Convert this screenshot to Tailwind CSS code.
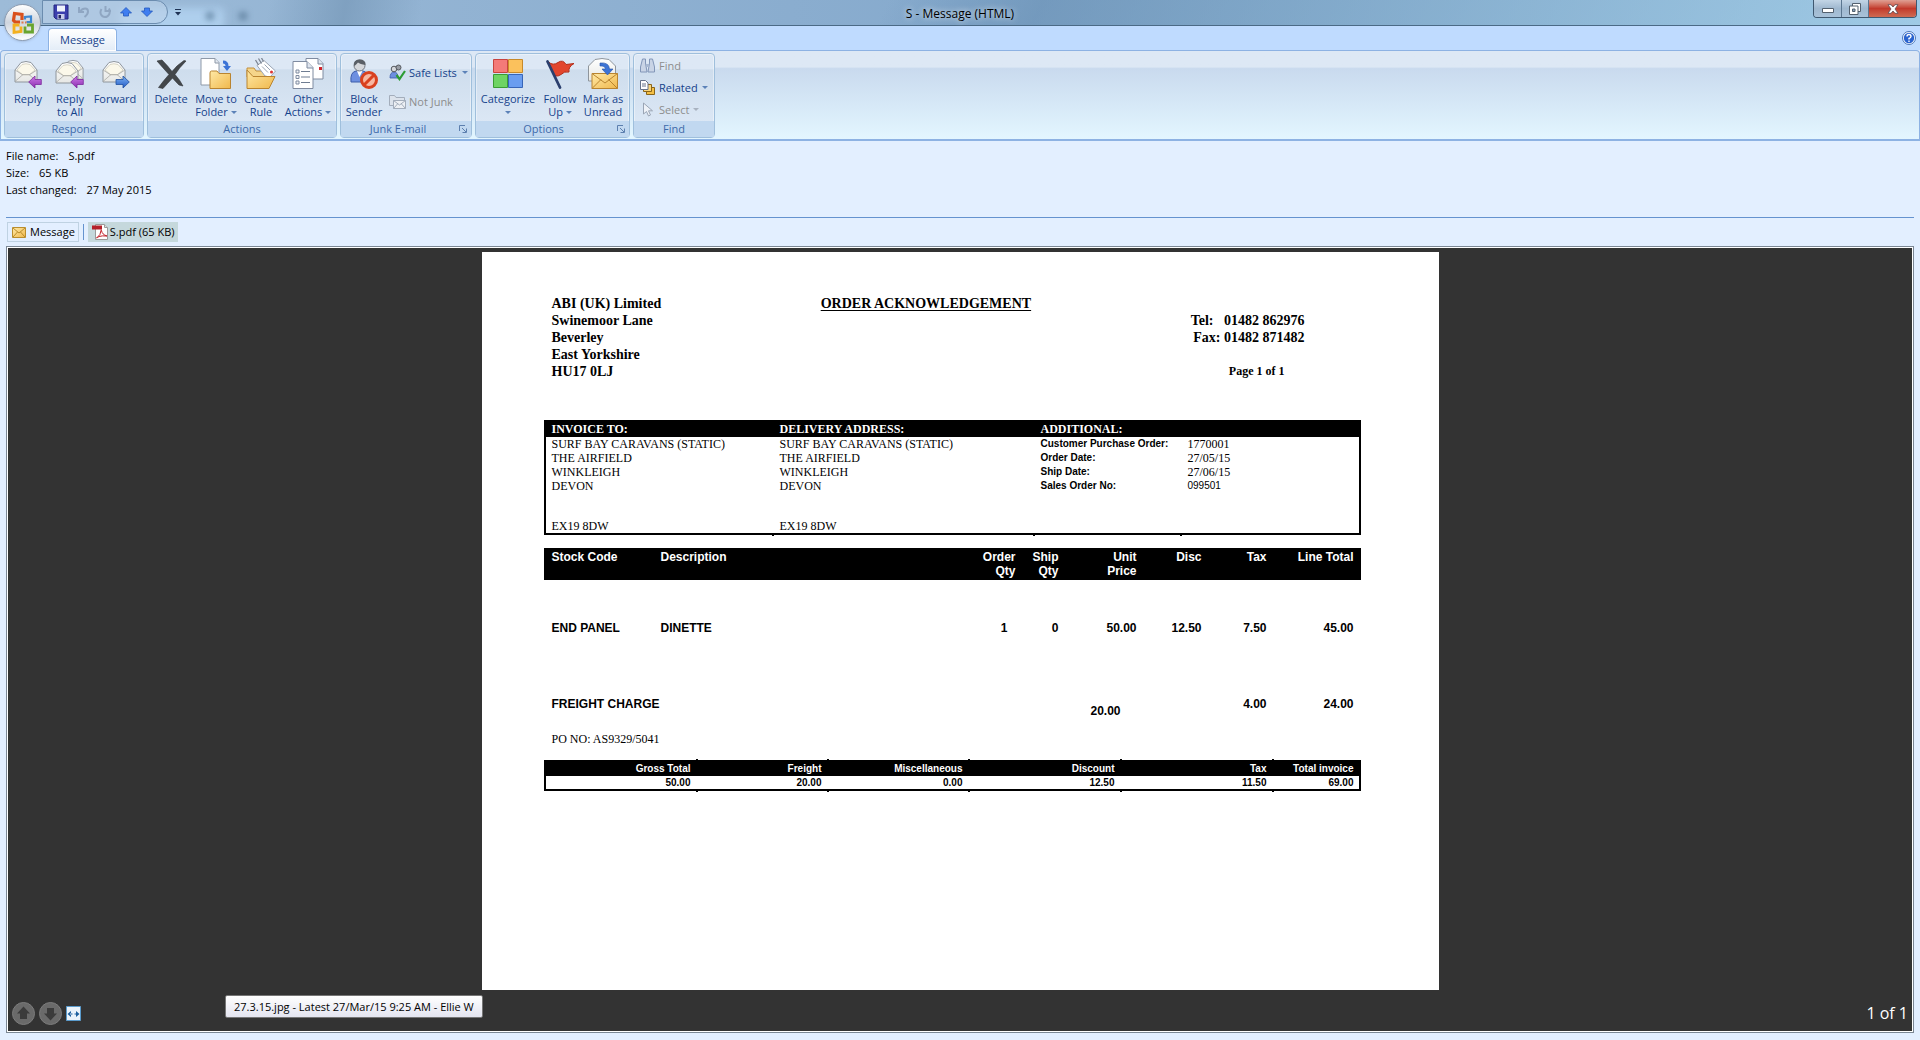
<!DOCTYPE html>
<html lang="en">
  <head>
    <meta charset="UTF-8" />
    <meta name="viewport" content="width=device-width, initial-scale=1.0" />
    <title>S - Message (HTML)</title>
    <script src="https://cdn.jsdelivr.net/npm/@tailwindcss/browser@4"></script>
  </head>

  <body class="min-h-screen flex flex-col bg-[#e3efff] font-['Open_Sans',sans-serif] text-[11px] text-black">
    <!-- Shared icon parts -->
    <svg class="absolute size-0">
      <defs>
        <linearGradient id="paper" x1="0" y1="0" x2="0" y2="1">
          <stop offset="0" stop-color="#ffffff" />
          <stop offset="1" stop-color="#e6e7e4" />
        </linearGradient>
        <linearGradient id="folder" x1="0" y1="0" x2="1" y2="1">
          <stop offset="0" stop-color="#ffe9a6" />
          <stop offset="1" stop-color="#f0b84c" />
        </linearGradient>
        <linearGradient id="purple" x1="0" y1="0" x2="0" y2="1">
          <stop offset="0" stop-color="#cf7be8" />
          <stop offset="1" stop-color="#8a2db0" />
        </linearGradient>
        <linearGradient id="blue" x1="0" y1="0" x2="0" y2="1">
          <stop offset="0" stop-color="#7db4f5" />
          <stop offset="1" stop-color="#2259c4" />
        </linearGradient>
        <symbol id="envelope" viewBox="0 0 24 24">
          <path d="M1 10 7 2.500Q12 .5 17 2.500L23 10V22H1Z" fill="url(#paper)" stroke="#8e959c" />
          <path d="M3 10 8 4.500Q12 3 16 4.500L21 10 15 15H9Z" fill="#fbf8ea" stroke="#c9c5b4" stroke-width=".7" />
          <path d="M1 21.500 9 14.500h6l8 7M1 10l8 5M23 10l-8 5" fill="none" stroke="#a9a9a4" stroke-width=".8" />
        </symbol>
        <symbol id="arrow-left" viewBox="0 0 14 14">
          <path d="M.7 7 7 1v3.500h6.300v5H7V13Z" fill="url(#purple)" stroke="#7b2a9c" stroke-width=".8" />
        </symbol>
      </defs>
    </svg>

    <!-- Title bar -->
    <header class="relative z-10 h-[26px] flex items-start justify-between border-b border-[#4b6a86] bg-linear-to-r from-[#9dbbd8] via-[#86aacd] to-[#a3c8e4]">
      <div class="absolute inset-0 overflow-hidden bg-linear-100 from-transparent from-14% via-[#7193b3]/60 via-18% to-transparent to-22%">
        <div class="absolute top-2 left-[120px] h-6 w-[104px] rounded bg-[#b4d4f2]/80 blur-xs"></div>
        <div class="absolute top-3 left-[206px] size-2 rounded-full bg-[#4f708f]/80 blur-[3px]"></div>
        <div class="absolute top-3 left-[239px] size-2 rounded-full bg-[#4f708f]/80 blur-[3px]"></div>
      </div>
      <div class="absolute inset-0 bg-linear-115 from-transparent from-46% via-[#5f87ac]/50 via-54% to-[#9ccbe6]/60"></div>
      <div class="relative flex flex-1 items-start">
        <div class="ml-[42px] flex h-6 w-[126px] items-center gap-[9px] rounded-r-full border border-[#6b8caf] bg-[#bdd2e9]/60 pl-2.5">
          <button aria-label="Save">
            <svg class="size-4" viewBox="0 0 16 16">
              <path d="M1 1h14v14H3l-2-2Z" fill="#3c3fae" stroke="#25277e" />
              <path d="M4 1.500h8v6H4Z" fill="#eef2fb" />
              <path d="M4.500 10h7v5h-7Z" fill="#c8cdea" />
              <path d="M5.500 11h2.500v3.500H5.500Z" fill="#23265f" />
            </svg>
          </button>
          <button aria-label="Undo">
            <svg class="size-3" viewBox="0 0 12 12">
              <path d="M1 1v5h5" fill="none" stroke="#8fa6c2" stroke-width="2" />
              <path d="M2 5.500C5 1.500 10 1.500 10 5.500 10 8 8.500 9.500 6.500 11" fill="none" stroke="#8fa6c2" stroke-width="2" />
            </svg>
          </button>
          <button aria-label="Repeat">
            <svg class="size-3" viewBox="0 0 12 12">
              <path d="M10 2.500C12 7 9.500 11 6 11S0 7 2.500 3" fill="none" stroke="#8fa6c2" stroke-width="2" />
              <path d="M6.500 0v5H12" fill="none" stroke="#8fa6c2" stroke-width="2" />
            </svg>
          </button>
          <button aria-label="Previous item">
            <svg class="size-3" viewBox="0 0 12 12">
              <path d="M6 1.500 11.500 7H8.500v3h-5V7H.5Z" fill="#3f7df0" stroke="#2458bd" stroke-width=".8" />
            </svg>
          </button>
          <button aria-label="Next item">
            <svg class="size-3" viewBox="0 0 12 12">
              <path d="M6 10.500 .5 5h3V2h5v3h3Z" fill="#3f7df0" stroke="#2458bd" stroke-width=".8" />
            </svg>
          </button>
        </div>
        <button class="mt-2 ml-1.5" aria-label="Customize toolbar">
          <svg class="size-2" viewBox="0 0 8 8">
            <path d="M1 1.500h6" stroke="#1f3355" />
            <path d="M1 4h6L4 7.500Z" fill="#1f3355" />
          </svg>
        </button>
      </div>
      <h1 class="relative pt-1 text-xs leading-5 text-shadow-[0_0_6px_white]">S - Message (HTML)</h1>
      <div class="relative flex flex-1 justify-end">
        <div class="mr-[3px] flex h-[18px] overflow-hidden rounded-b border border-t-0 border-[#3f5870]">
          <button class="flex w-7 items-center justify-center border-r border-[#5b7690] bg-linear-to-b from-[#c3d5e6] via-[#9fb8cf] via-50% to-[#a9c2d9]" aria-label="Minimize">
            <svg class="w-3 h-2" viewBox="0 0 12 8"><path d="M.5 3.500h11v4H.5Z" fill="#fff" stroke="#53606e" /></svg>
          </button>
          <button class="flex w-[27px] items-center justify-center border-r border-[#5b7690] bg-linear-to-b from-[#c3d5e6] via-[#9fb8cf] via-50% to-[#a9c2d9]" aria-label="Restore">
            <svg class="size-3" viewBox="0 0 12 12">
              <path d="M3.500 .5h8v8h-8Z" fill="#fff" stroke="#53606e" />
              <path d="M.5 3h8.500v8.500H.5Z" fill="#fff" stroke="#53606e" />
              <path d="M3.500 6h2.500v2.500H3.500Z" fill="#8aa5bf" stroke="#53606e" />
            </svg>
          </button>
          <button class="flex w-[47px] items-center justify-center bg-linear-to-b from-[#dfa094] via-[#c2392b] via-50% to-[#cf6a52]" aria-label="Close">
            <svg class="w-3 h-2.5" viewBox="0 0 12 10">
              <path d="M1 .7h3L6 3 8 .7h3L8 5l3 4.300H8L6 7 4 9.300H1L4 5Z" fill="#fff" stroke="#5d4a52" stroke-width=".8" />
            </svg>
          </button>
        </div>
      </div>

      <button class="absolute top-1 left-1 size-[37px] rounded-full border border-[#8d9cb0] bg-linear-to-b from-white via-[#cfd5de] via-50% to-white shadow" aria-label="Office menu">
        <svg class="m-auto size-6" viewBox="0 0 24 24" fill="none">
          <path d="M11 9V3.500L3.500 2.500 2.500 9.500l1.500 1.500h5" stroke="#d9501c" stroke-width="3.200" />
          <path d="M14 8.500V6l6-.5V11h-4.500" stroke="#3e86cf" stroke-width="2.200" />
          <path d="M10 15.500v5L3 21.500V14h5.500" stroke="#f3b01f" stroke-width="2.800" />
          <path d="M14 15.500v5.500h7.500V14H16" stroke="#69a52f" stroke-width="2.800" />
          <path d="M10.500 11.500h5" stroke="#e07a4a" stroke-width="1.800" stroke-dasharray="2 1.500" />
        </svg>
      </button>
    </header>

    <!-- Ribbon tabs -->
    <nav class="flex h-6 items-end justify-between bg-[#bfdbff] pl-12 pr-1">
      <button class="relative -mb-px h-[23px] w-[69px] rounded-t border border-b-0 border-[#8db2e3] bg-linear-to-b from-white to-[#e2ecf7] text-[#15428b] shadow-[inset_0_0_0_1px_white]">Message</button>
      <button class="self-center" aria-label="Help">
        <svg class="size-3.5" viewBox="0 0 14 14">
          <circle cx="7" cy="7" r="6.500" fill="#fff" stroke="#4a76b8" />
          <circle cx="7" cy="7" r="5.200" fill="#2a63cf" />
          <path d="M5 5.500Q5 3.500 7 3.500T9 5.500Q9 6.500 7 7.500V8.500M7 9.500v1.500" fill="none" stroke="#fff" stroke-width="1.400" />
        </svg>
      </button>
    </nav>

    <!-- Ribbon -->
    <div class="flex h-[91px] items-start gap-[3px] rounded-t-sm border border-b-2 border-[#8db2e3] bg-linear-to-b from-[#dde8f5] from-18% via-[#c9daee] via-20% to-[#e3f6ff] px-[3px] pt-0.5 pb-1 text-[#15428b] leading-[13px]">
      <section class="flex h-[85px] w-[140px] flex-col rounded-sm border border-[#9fbfdc] bg-linear-to-b from-[#dde8f5] from-18% via-[#cedded] via-19% to-[#dfeaf7] shadow-[inset_0_0_0_1px_#ffffff66]">
        <div class="flex flex-1 items-start px-0.5 pt-1">
          <button class="flex w-[42px] flex-col items-center gap-0.5">
            <svg class="size-8" viewBox="0 0 32 32">
              <use href="#envelope" x="2" y="2" width="24" height="24" />
              <use href="#arrow-left" x="16" y="17" width="14" height="14" />
            </svg>
            <span>Reply</span>
          </button>
          <button class="flex w-[42px] flex-col items-center gap-0.5">
            <svg class="size-8" viewBox="0 0 32 32">
              <use href="#envelope" x="8" y="1" width="22" height="22" />
              <use href="#envelope" x="1" y="3" width="24" height="24" />
              <use href="#arrow-left" x="16" y="17" width="14" height="14" />
            </svg>
            <span>Reply<br />to All</span>
          </button>
          <button class="flex w-12 flex-col items-center gap-0.5">
            <svg class="size-8" viewBox="0 0 32 32">
              <use href="#envelope" x="3" y="2" width="24" height="24" />
              <path d="M30.300 24 24 18v3.500h-7v5h7V30Z" fill="url(#blue)" stroke="#22509f" stroke-width=".8" />
            </svg>
            <span>Forward</span>
          </button>
        </div>
        <h2 class="h-4 bg-[#c1d8f0] text-center leading-4 text-[#3e6aaa]">Respond</h2>
      </section>

      <section class="flex h-[85px] w-[190px] flex-col rounded-sm border border-[#9fbfdc] bg-linear-to-b from-[#dde8f5] from-18% via-[#cedded] via-19% to-[#dfeaf7] shadow-[inset_0_0_0_1px_#ffffff66]">
        <div class="flex flex-1 items-start px-0.5 pt-1">
          <button class="flex w-[42px] flex-col items-center gap-0.5">
            <svg class="size-8" viewBox="0 0 32 32">
              <path d="M2 3 7 2Q13 8 17 13.500 22 7 29 2.500L31 3Q24 10 20 16.500 25 22 28 28L24 27Q20 23 17.500 20 12 26 8 30.500L3.500 29.500Q9 22 14 16.500 8 10 2 3Z" fill="#43474b" stroke="#2f3235" stroke-width=".6" />
            </svg>
            <span>Delete</span>
          </button>
          <button class="flex w-12 flex-col items-center gap-0.5">
            <svg class="size-8" viewBox="0 0 32 32">
              <path d="M1 .5h14l4 4V27H1Z" fill="#fff" stroke="#8e99a8" />
              <path d="M15 .5V5h4" fill="#e3e8ef" stroke="#8e99a8" />
              <path d="M10 15q0-2 1.500-2h5.500l2 2.500h11.500V30.500H10Z" fill="url(#folder)" stroke="#b98430" />
              <path d="M23 2.500Q28.500 2.500 28.500 8H31l-4 5-4-5h2.500Q25.500 5.500 23 5.500Z" fill="#3d74d6" />
            </svg>
            <span class="whitespace-nowrap">Move to<br />Folder <i class="mb-0.5 inline-block border-x-[3px] border-t-[3px] border-x-transparent border-t-[#5c82b8]"></i></span>
          </button>
          <button class="flex w-[42px] flex-col items-center gap-0.5">
            <svg class="size-8" viewBox="0 0 32 32">
              <path d="M2 10h7l2 3h13v6H2Z" fill="#f5d58a" stroke="#c18f3c" />
              <path d="M12 7.500 19 2.500 30.500 13 25 19 20 18Z" fill="#fff" stroke="#9ba5b4" />
              <path d="M10.500 2l3 5M13.500 .5l3 5M16.500 0l2 3.500" stroke="#7d8592" stroke-width="1.300" />
              <path d="M17 8.500 23 14.500M19.500 6.500 25 12" stroke="#9ba5b4" />
              <circle cx="26.500" cy="14" r="1.500" fill="#d33" />
              <path d="M2 30.500V12L8 18.500H30L24 30.500Z" fill="url(#folder)" stroke="#b98430" />
            </svg>
            <span>Create<br />Rule</span>
          </button>
          <button class="flex w-[52px] flex-col items-center gap-0.5">
            <svg class="size-8" viewBox="0 0 32 32">
              <path d="M14 .5h12l5 5V21H14Z" fill="#fff" stroke="#7f8ba0" />
              <path d="M26 .5V6h5" fill="#dfe5ee" stroke="#7f8ba0" />
              <path d="M27 9h3v3h-3Z" fill="#d0252b" />
              <path d="M1 3.500h14l6 6V30.500H1Z" fill="#fff" stroke="#7f8ba0" />
              <path d="M15 3.500V10h6" fill="#dfe5ee" stroke="#7f8ba0" />
              <path d="M9 13.500h9M9 19h9M9 24.500h9" stroke="#6f7d92" />
              <path d="M4 12h3v3H4ZM4 17.500h3v3H4ZM4 23h3v3H4Z" fill="#f1f3f6" stroke="#7f8ba0" />
            </svg>
            <span class="whitespace-nowrap">Other<br />Actions <i class="mb-0.5 inline-block border-x-[3px] border-t-[3px] border-x-transparent border-t-[#5c82b8]"></i></span>
          </button>
        </div>
        <h2 class="h-4 bg-[#c1d8f0] text-center leading-4 text-[#3e6aaa]">Actions</h2>
      </section>

      <section class="flex h-[85px] w-[132px] flex-col rounded-sm border border-[#9fbfdc] bg-linear-to-b from-[#dde8f5] from-18% via-[#cedded] via-19% to-[#dfeaf7] shadow-[inset_0_0_0_1px_#ffffff66]">
        <div class="flex flex-1 items-start px-0.5 pt-1">
          <button class="flex w-[42px] flex-col items-center gap-0.5">
            <svg class="size-8" viewBox="0 0 32 32">
              <path d="M3 24Q2 14 8 13h7Q21 14 20 24Z" fill="#6d8fe0" stroke="#3c5cab" />
              <path d="M9 13l2.500 6 3-6Z" fill="#fff" />
              <circle cx="11.500" cy="7.500" r="5.500" fill="#d6d8dc" stroke="#73777f" />
              <path d="M6 8Q5 1.500 11.500 1.500T17.500 7Q12 6 10 4.500 8 7 6 8Z" fill="#5a5f66" />
              <circle cx="21" cy="22" r="7.500" fill="#f7b7a2" stroke="#d9411f" stroke-width="3" />
              <path d="M16 27 26 17" stroke="#d9411f" stroke-width="3" />
            </svg>
            <span>Block<br />Sender</span>
          </button>
          <div class="flex flex-col gap-3 pt-1.5 pl-1">
            <button class="flex items-center gap-[3px] whitespace-nowrap">
              <svg class="size-[17px]" viewBox="0 0 17 17">
                <path d="M1 14q0-6 4-6t4 6Z" fill="#6d8fe0" stroke="#3c5cab" stroke-width=".8" />
                <circle cx="5" cy="5" r="2.800" fill="#d6d8dc" stroke="#55595f" />
                <circle cx="9.500" cy="3.500" r="2.500" fill="#9a9ea5" stroke="#55595f" />
                <path d="m7.500 11 3 4L16 7" fill="none" stroke="#2c9c33" stroke-width="2.200" />
              </svg>
              Safe Lists
              <i class="ml-0.5 border-x-[3px] border-t-[3px] border-x-transparent border-t-[#5c82b8]"></i>
            </button>
            <button class="flex items-center gap-[3px] whitespace-nowrap text-[#8d8d8d]" disabled>
              <svg class="size-[17px]" viewBox="0 0 17 17">
                <path d="M.5 2.500h5l1.500 2h8.500v8H.5Z" fill="#dce3ec" stroke="#a3adbb" />
                <path d="M4.500 7.500h12v8h-12Z" fill="#edf0f4" stroke="#a3adbb" />
                <path d="m4.500 7.500 6 4.500 6-4.500M4.500 15.500l4-4.500M16.500 15.500l-4-4.500" fill="none" stroke="#a3adbb" />
              </svg>
              Not Junk
            </button>
          </div>
        </div>
        <h2 class="relative h-4 bg-[#c1d8f0] pr-4 text-center leading-4 text-[#3e6aaa]">
          Junk E-mail
          <button class="absolute top-1 right-1" aria-label="Junk E-mail options">
            <svg class="size-2" viewBox="0 0 8 8"><path d="M.5 6V.5H6M3 3l4 4M7.500 3.500v4h-4" fill="none" stroke="#5c7fae" /></svg>
          </button>
        </h2>
      </section>

      <section class="flex h-[85px] w-[155px] flex-col rounded-sm border border-[#9fbfdc] bg-linear-to-b from-[#dde8f5] from-18% via-[#cedded] via-19% to-[#dfeaf7] shadow-[inset_0_0_0_1px_#ffffff66]">
        <div class="flex flex-1 items-start px-0.5 pt-1">
          <button class="flex w-[60px] flex-col items-center gap-0.5">
            <svg class="size-8" viewBox="0 0 32 32">
              <path d="M1.500 1.500h14v13h-14Z" fill="#f47a78" stroke="#c8443f" />
              <path d="M16.500 1.500h14v13h-14Z" fill="#fbc15c" stroke="#c88a2a" />
              <path d="M1.500 16.500h14v13h-14Z" fill="#6ed463" stroke="#3a9c34" />
              <path d="M16.500 16.500h14v13h-14Z" fill="#6a9df0" stroke="#3765b8" />
            </svg>
            <span class="flex flex-col items-center">Categorize <i class="mt-1.5 border-x-[3px] border-t-[3px] border-x-transparent border-t-[#5c82b8]"></i></span>
          </button>
          <button class="flex w-11 flex-col items-center gap-0.5">
            <svg class="size-8" viewBox="0 0 32 32">
              <path d="M4.500 4Q9 8 14 4.500T22 6.500L30 5.500Q24 9 25 14q-5-1-8 2.500-2 2-7 1.500Z" fill="#e2452d" stroke="#b32c18" />
              <path d="M3.500 3.500 16 29.500" stroke="#2b3f6e" stroke-width="2.800" stroke-linecap="round" />
            </svg>
            <span class="whitespace-nowrap">Follow<br />Up <i class="mb-0.5 inline-block border-x-[3px] border-t-[3px] border-x-transparent border-t-[#5c82b8]"></i></span>
          </button>
          <button class="flex w-[42px] flex-col items-center gap-0.5">
            <svg class="size-8" viewBox="0 0 32 32">
              <path d="M1.500 8 8 1.500Q15-.5 22 1.500L28.500 8V23h-27Z" fill="url(#paper)" stroke="#8e959c" />
              <path d="M5 15.500h25.500v15H5Z" fill="url(#folder)" stroke="#b98430" />
              <path d="m5 15.500 13 9.500 12.500-9.500M5 30.500l9-9M30.500 30.500l-9-9" fill="none" stroke="#b98430" />
              <path d="M13 5q9-1 9.500 6H26l-5.500 6L15 11h3.500Q18 7.500 13 8Z" fill="#3d74d6" stroke="#2550a5" stroke-width=".6" />
            </svg>
            <span class="whitespace-nowrap">Mark as<br />Unread</span>
          </button>
        </div>
        <h2 class="relative h-4 bg-[#c1d8f0] pr-[18px] text-center leading-4 text-[#3e6aaa]">
          Options
          <button class="absolute top-1 right-1" aria-label="Message options">
            <svg class="size-2" viewBox="0 0 8 8"><path d="M.5 6V.5H6M3 3l4 4M7.500 3.500v4h-4" fill="none" stroke="#5c7fae" /></svg>
          </button>
        </h2>
      </section>

      <section class="flex h-[85px] w-[82px] flex-col rounded-sm border border-[#9fbfdc] bg-linear-to-b from-[#dde8f5] from-18% via-[#cedded] via-19% to-[#dfeaf7] shadow-[inset_0_0_0_1px_#ffffff66]">
        <div class="flex flex-1 flex-col items-start gap-[7px] pt-1 pl-1.5">
          <button class="flex items-center gap-1 text-[#8d8d8d]" disabled>
            <svg class="size-[15px]" viewBox="0 0 15 15">
              <path d="M2.500 1h3v4l1.500 9H.5V9ZM9.500 1h3l2 8v5H8l1.500-9Z" fill="#c9d4e6" stroke="#8296b8" />
              <path d="M6 6h3v3H6Z" fill="#a8b8d2" />
            </svg>
            Find
          </button>
          <button class="flex items-center gap-1">
            <svg class="size-[15px]" viewBox="0 0 15 15">
              <path d="M6.500 7.500h8v7h-8Z" fill="#f4bf45" stroke="#8a6518" />
              <path d="M3.500 4.500h8v7h-8Z" fill="#f9d57d" stroke="#8a6518" />
              <path d="M.5 .5h5l2.500 2.500v6.500H.5Z" fill="#fff" stroke="#66738a" />
              <path d="M2 4h4M2 6h4" stroke="#66738a" />
            </svg>
            Related
            <i class="border-x-[3px] border-t-[3px] border-x-transparent border-t-[#5c82b8]"></i>
          </button>
          <button class="flex items-center gap-1 text-[#8d8d8d]" disabled>
            <svg class="size-[15px]" viewBox="0 0 15 15">
              <path d="M3.500 1v11l3-2.500 2 4.500 2-1-2-4.200h4Z" fill="#eef2f8" stroke="#9aa5b5" />
            </svg>
            Select
            <i class="border-x-[3px] border-t-[3px] border-x-transparent border-t-[#a8b2c0]"></i>
          </button>
        </div>
        <h2 class="h-4 bg-[#c1d8f0] text-center leading-4 text-[#3e6aaa]">Find</h2>
      </section>
    </div>

    <!-- Attachment details -->
    <dl class="mx-1.5 h-[77px] border-b border-[#6593cf] pt-1.5 leading-[17px]">
      <div class="flex gap-2.5"><dt>File name:</dt><dd>S.pdf</dd></div>
      <div class="flex gap-2.5"><dt>Size:</dt><dd>65 KB</dd></div>
      <div class="flex gap-2.5"><dt>Last changed:</dt><dd>27 May 2015</dd></div>
    </dl>

    <div class="flex items-center px-[7px] pt-1 pb-1">
      <button class="flex h-5 items-center gap-1 border border-[#bfd2e2] pr-[3px] pl-1">
        <svg class="h-3 w-3.5" viewBox="0 0 14 12">
          <path d="M.5 1.500h13v10H.5Z" fill="url(#folder)" stroke="#b98d2d" />
          <path d="m1 2 6 5 6-5M1 11l4.500-5M13 11 8.500 6" fill="none" stroke="#b98d2d" />
        </svg>
        Message
      </button>
      <span class="mx-1 h-4 w-px bg-[#6593cf]"></span>
      <button class="flex h-5 items-center gap-0.5 bg-[#c5d8dc] pr-[3px] pl-1">
        <svg class="size-4" viewBox="0 0 16 16">
          <path d="M3.500 .5h9l3 3v12h-12Z" fill="#fff" stroke="#9a9a9a" />
          <path d="M12.500 .5v3h3" fill="#ddd" stroke="#9a9a9a" />
          <path d="M0 1.500h10v4H0Z" fill="#b5202a" />
          <path d="M4.500 14Q9 11 9 6.500q0-1.500.5 0 .5 4 5.500 5.500-5-.5-8 .5-2 1.500-2.500 1.500Z" fill="none" stroke="#c3202a" />
        </svg>
        S.pdf (65 KB)
      </button>
    </div>

    <!-- Preview pane -->
    <main class="relative mx-1.5 mb-[7px] flex flex-1 flex-col border border-[#7b8794] bg-[#333333] pt-[5px] outline-1 -outline-offset-2 outline-white">
      <article class="mx-auto min-h-[738px] w-full max-w-[957px] bg-white pt-[43px] pr-[78px] pl-[62px] font-['Liberation_Serif',serif]">
        <div class="flex h-[125px] justify-between pr-14 pl-2 text-sm leading-[17px] font-bold">
          <address class="not-italic">
            ABI (UK) Limited<br />
            Swinemoor Lane<br />
            Beverley<br />
            East Yorkshire<br />
            HU17 0LJ
          </address>
          <h2 class="underline underline-offset-2">ORDER ACKNOWLEDGEMENT</h2>
          <div class="pt-[17px] text-right">
            <p class="whitespace-pre">Tel:   01482 862976</p>
            <p>Fax: 01482 871482</p>
            <p class="pt-[17px] pr-5 text-xs leading-[17px]">Page 1 of 1</p>
          </div>
        </div>

        <table class="w-full table-fixed border-2 border-black text-xs leading-[14px]">
          <colgroup>
            <col class="w-[229px]" />
            <col class="w-[261px]" />
            <col class="w-[147px]" />
            <col />
          </colgroup>
          <thead class="bg-black text-left leading-[15px] text-white">
            <tr>
              <th class="pl-1.5">INVOICE TO:</th>
              <th class="pl-1.5">DELIVERY ADDRESS:</th>
              <th class="pl-1.5" colspan="2">ADDITIONAL:</th>
            </tr>
          </thead>
          <tbody class="[&_td]:p-0 [&_td]:pl-1.5">
            <tr>
              <td>SURF BAY CARAVANS (STATIC)</td>
              <td>SURF BAY CARAVANS (STATIC)</td>
              <td class="font-['Liberation_Sans',sans-serif] text-[10px] font-bold whitespace-nowrap">Customer Purchase Order:</td>
              <td>1770001</td>
            </tr>
            <tr>
              <td>THE AIRFIELD</td>
              <td>THE AIRFIELD</td>
              <td class="font-['Liberation_Sans',sans-serif] text-[10px] font-bold">Order Date:</td>
              <td>27/05/15</td>
            </tr>
            <tr>
              <td>WINKLEIGH</td>
              <td>WINKLEIGH</td>
              <td class="font-['Liberation_Sans',sans-serif] text-[10px] font-bold">Ship Date:</td>
              <td>27/06/15</td>
            </tr>
            <tr>
              <td>DEVON</td>
              <td>DEVON</td>
              <td class="font-['Liberation_Sans',sans-serif] text-[10px] font-bold">Sales Order No:</td>
              <td class="font-['Liberation_Sans',sans-serif] text-[10px]">099501</td>
            </tr>
            <tr class="h-[41px] align-bottom">
              <td class="relative after:absolute after:right-0 after:-bottom-[3px] after:h-[3px] after:w-0.5 after:bg-black">EX19 8DW</td>
              <td class="relative after:absolute after:right-0 after:-bottom-[3px] after:h-[3px] after:w-0.5 after:bg-black">EX19 8DW</td>
              <td class="relative after:absolute after:right-0 after:-bottom-[3px] after:h-[3px] after:w-0.5 after:bg-black"></td>
              <td></td>
            </tr>
          </tbody>
        </table>

        <table class="mt-[13px] w-full table-fixed font-['Liberation_Sans',sans-serif] text-xs leading-[14px] font-bold">
          <colgroup>
            <col class="w-[109px]" />
            <col />
            <col class="w-[60px]" />
            <col class="w-[43px]" />
            <col class="w-[78px]" />
            <col class="w-[65px]" />
            <col class="w-[65px]" />
            <col class="w-[94px]" />
          </colgroup>
          <thead class="h-8 bg-black align-top text-white [&_th]:pt-0.5">
            <tr class="text-right">
              <th class="pl-2 text-left">Stock Code</th>
              <th class="pl-2 text-left">Description</th>
              <th>Order<br />Qty</th>
              <th>Ship<br />Qty</th>
              <th>Unit<br />Price</th>
              <th>Disc</th>
              <th>Tax</th>
              <th class="pr-[7px]">Line Total</th>
            </tr>
          </thead>
          <tbody class="text-right">
            <tr class="h-24">
              <td class="pl-2 text-left">END PANEL</td>
              <td class="pl-2 text-left">DINETTE</td>
              <td class="pr-2">1</td>
              <td>0</td>
              <td>50.00</td>
              <td>12.50</td>
              <td>7.50</td>
              <td class="pr-[7px]">45.00</td>
            </tr>
            <tr class="h-14 align-middle">
              <td class="pl-2 text-left" colspan="2">FREIGHT CHARGE</td>
              <td></td>
              <td></td>
              <td class="pt-3.5 pr-4">20.00</td>
              <td></td>
              <td>4.00</td>
              <td class="pr-[7px]">24.00</td>
            </tr>
          </tbody>
        </table>
        <p class="pl-2 text-xs leading-[14px]">PO NO: AS9329/5041</p>

        <table class="mt-3.5 w-full table-fixed border-2 border-black text-right font-['Liberation_Sans',sans-serif] text-[10px] leading-[13px] font-bold">
          <colgroup>
            <col class="w-[153px]" />
            <col class="w-[131px]" />
            <col class="w-[141px]" />
            <col class="w-[152px]" />
            <col class="w-[152px]" />
            <col />
          </colgroup>
          <thead class="bg-black leading-[14px] text-white">
            <tr>
              <th class="relative pr-[7px] after:absolute after:right-0 after:-top-[3px] after:h-[3px] after:w-0.5 after:bg-black">Gross Total</th>
              <th class="relative pr-[7px] after:absolute after:right-0 after:-top-[3px] after:h-[3px] after:w-0.5 after:bg-black">Freight</th>
              <th class="relative pr-[7px] after:absolute after:right-0 after:-top-[3px] after:h-[3px] after:w-0.5 after:bg-black">Miscellaneous</th>
              <th class="relative pr-[7px] after:absolute after:right-0 after:-top-[3px] after:h-[3px] after:w-0.5 after:bg-black">Discount</th>
              <th class="relative pr-[7px] after:absolute after:right-0 after:-top-[3px] after:h-[3px] after:w-0.5 after:bg-black">Tax</th>
              <th class="pr-[5px]">Total invoice</th>
            </tr>
          </thead>
          <tbody>
            <tr>
              <td class="relative pr-[7px] after:absolute after:right-0 after:-bottom-[3px] after:h-[3px] after:w-0.5 after:bg-black">50.00</td>
              <td class="relative pr-[7px] after:absolute after:right-0 after:-bottom-[3px] after:h-[3px] after:w-0.5 after:bg-black">20.00</td>
              <td class="relative pr-[7px] after:absolute after:right-0 after:-bottom-[3px] after:h-[3px] after:w-0.5 after:bg-black">0.00</td>
              <td class="relative pr-[7px] after:absolute after:right-0 after:-bottom-[3px] after:h-[3px] after:w-0.5 after:bg-black">12.50</td>
              <td class="relative pr-[7px] after:absolute after:right-0 after:-bottom-[3px] after:h-[3px] after:w-0.5 after:bg-black">11.50</td>
              <td class="pr-[5px]">69.00</td>
            </tr>
          </tbody>
        </table>
      </article>

      <!-- Page controls -->
      <div class="flex flex-1 items-center gap-1 px-[5px] pt-1">
        <button aria-label="Previous page">
          <svg class="size-[23px]" viewBox="0 0 23 23">
            <circle cx="11.500" cy="11.500" r="11" fill="#6a6a6a" stroke="#7c7c7c" />
            <path d="M11.500 4.500 18 11.500h-3V17H8v-5.500H5Z" fill="#3b3b3b" />
          </svg>
        </button>
        <button aria-label="Next page">
          <svg class="size-[23px]" viewBox="0 0 23 23">
            <circle cx="11.500" cy="11.500" r="11" fill="#6a6a6a" stroke="#7c7c7c" />
            <path d="M11.500 18.500 5 11.500h3V6h7v5.500h3Z" fill="#3b3b3b" />
          </svg>
        </button>
        <button aria-label="Fit width">
          <svg class="size-[15px]" viewBox="0 0 15 15">
            <path d="M.5 .5h14v14H.5Z" fill="#eaf3fb" stroke="#5a9bcc" />
            <path d="m5 5-3.500 3L5 11ZM10 5l3.500 3-3.500 3ZM4 7.500h2.500v1H4ZM8.500 7.500H11v1H8.500Z" fill="#1c5f9e" />
          </svg>
        </button>
        <span class="ml-auto text-base leading-5 text-white">1 of 1</span>
      </div>

      <div class="absolute bottom-3.5 left-[218px] rounded-xs border border-[#767676] bg-linear-to-b from-white to-[#e4e5f0] px-2 leading-[21px] whitespace-nowrap" role="tooltip">
        27.3.15.jpg - Latest 27/Mar/15 9:25 AM - Ellie W
      </div>
    </main>
  </body>
</html>
